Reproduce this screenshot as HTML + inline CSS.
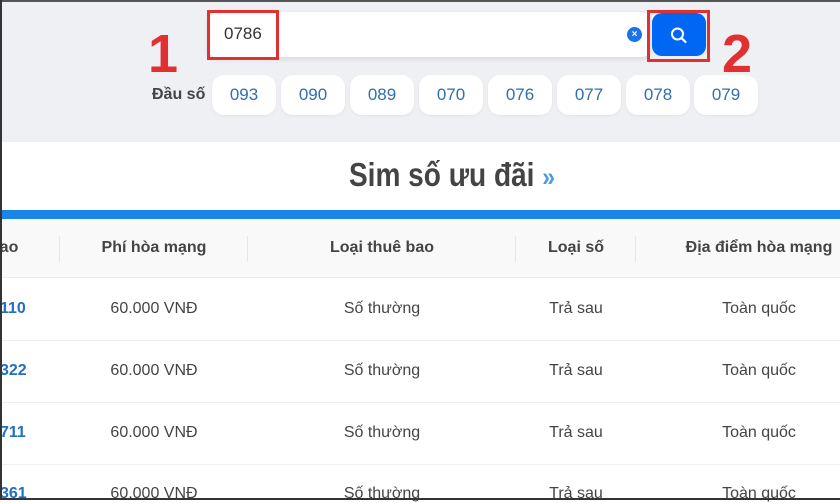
<!DOCTYPE html>
<html><head><meta charset="utf-8"><style>
*{margin:0;padding:0;box-sizing:border-box}
body{width:840px;height:500px;overflow:hidden;background:#fff;font-family:"Liberation Sans Narrow","Liberation Sans",sans-serif;position:relative}
.top{position:absolute;left:0;top:0;width:840px;height:142px;background:#eef0f3;border-top:2px solid #555}
.frame{position:absolute;left:0;top:0;width:840px;height:500px;border-left:2px solid #333;border-bottom:2px solid #333;pointer-events:none}
.search{position:absolute;left:208px;top:12px;width:442px;height:45px;background:#fff;border-radius:8px;box-shadow:0 2px 6px rgba(0,0,0,.1)}
.val{position:absolute;left:224px;top:24px;font-size:17px;color:#333}
.clr{position:absolute;left:627px;top:27px;width:15px;height:15px;border-radius:50%;background:#1a73e8;color:#fff;font:bold 10px/15px "Liberation Sans",sans-serif;text-align:center}
.btn{position:absolute;left:652px;top:13px;width:54px;height:43px;background:#0067f5;border-radius:10px}
.red{position:absolute;border:3px solid #e23030}
.num{position:absolute;color:#e23030;font:bold 54px/1 "Liberation Sans",sans-serif}
.lbl{position:absolute;left:152px;top:86px;font-weight:bold;font-size:16px;color:#444}
.chip{position:absolute;top:75px;width:64px;height:40px;background:#fff;border-radius:12px;color:#2f6fb0;font-size:17px;line-height:40px;text-align:center;box-shadow:0 1px 3px rgba(0,0,0,.06)}
h1{position:absolute;left:452px;top:156px;transform:translateX(-50%) scaleX(.85);white-space:nowrap;font-size:33px;color:#444;font-weight:bold}
h1 span{color:#4c9be0;font-size:27px}
.bar{position:absolute;left:0;top:210px;width:840px;height:9px;background:#1a84e8}
.hdr{position:absolute;left:0;top:219px;width:840px;height:59px;background:#f9f9f9;border-bottom:1px solid #ececec}
.t{position:absolute;font-size:16px;transform:translateX(-50%);white-space:nowrap}
.h{font-weight:bold;color:#444;top:239px}
.d{color:#444;font-size:16px}
.vl{position:absolute;top:236px;height:26px;width:1px;background:#e6e6e6}
.rl{position:absolute;left:0;width:840px;height:1px;background:#efefef}
.b{position:absolute;left:0;color:#1f6fc2;font-weight:bold;font-size:16px}
</style></head><body>
<div class="top"></div>
<div class="search"></div>
<div class="val">0786</div>
<div class="clr">×</div>
<div class="btn"><svg width="54" height="43" viewBox="0 0 54 43"><circle cx="25.5" cy="21" r="5.5" fill="none" stroke="#fff" stroke-width="2"/><line x1="29.5" y1="25" x2="33.5" y2="29" stroke="#fff" stroke-width="2.2" stroke-linecap="round"/></svg></div>
<div class="red" style="left:207px;top:10px;width:72px;height:50px"></div>
<div class="red" style="left:647px;top:10px;width:63px;height:52px"></div>
<div class="num" style="left:148px;top:27px">1</div>
<div class="num" style="left:722px;top:27px">2</div>
<div class="lbl">Đầu số</div>
<div class="chip" style="left:212px">093</div>
<div class="chip" style="left:281px">090</div>
<div class="chip" style="left:350px">089</div>
<div class="chip" style="left:419px">070</div>
<div class="chip" style="left:488px">076</div>
<div class="chip" style="left:557px">077</div>
<div class="chip" style="left:626px">078</div>
<div class="chip" style="left:694px">079</div>
<h1>Sim số ưu đãi <span>»</span></h1>
<div class="bar"></div>
<div class="hdr"></div>
<div class="vl" style="left:59px"></div><div class="vl" style="left:247px"></div><div class="vl" style="left:515px"></div><div class="vl" style="left:635px"></div>
<div class="t h" style="left:9px">ao</div>
<div class="t h" style="left:154px">Phí hòa mạng</div>
<div class="t h" style="left:382px">Loại thuê bao</div>
<div class="t h" style="left:576px">Loại số</div>
<div class="t h" style="left:759px">Địa điểm hòa mạng</div>
<div class="rl" style="top:340px"></div><div class="rl" style="top:402px"></div><div class="rl" style="top:464px"></div>
<div class="b" style="top:300px">110</div>
<div class="t d" style="left:154px;top:300px">60.000 VNĐ</div><div class="t d" style="left:382px;top:300px">Số thường</div><div class="t d" style="left:576px;top:300px">Trả sau</div><div class="t d" style="left:759px;top:300px">Toàn quốc</div>
<div class="b" style="top:362px">322</div>
<div class="t d" style="left:154px;top:362px">60.000 VNĐ</div><div class="t d" style="left:382px;top:362px">Số thường</div><div class="t d" style="left:576px;top:362px">Trả sau</div><div class="t d" style="left:759px;top:362px">Toàn quốc</div>
<div class="b" style="top:424px">711</div>
<div class="t d" style="left:154px;top:424px">60.000 VNĐ</div><div class="t d" style="left:382px;top:424px">Số thường</div><div class="t d" style="left:576px;top:424px">Trả sau</div><div class="t d" style="left:759px;top:424px">Toàn quốc</div>
<div class="b" style="top:485px">361</div>
<div class="t d" style="left:154px;top:485px">60.000 VNĐ</div><div class="t d" style="left:382px;top:485px">Số thường</div><div class="t d" style="left:576px;top:485px">Trả sau</div><div class="t d" style="left:759px;top:485px">Toàn quốc</div>
<div class="frame"></div>
</body></html>
